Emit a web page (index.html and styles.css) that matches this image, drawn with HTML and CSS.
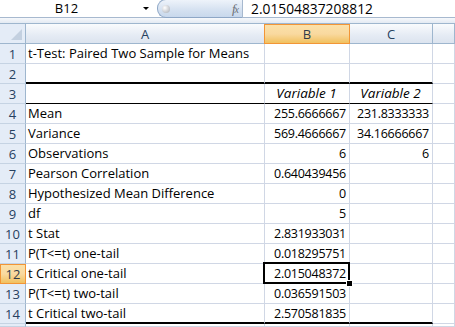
FILE: index.html
```html
<!DOCTYPE html>
<html lang="en">
<head>
    <meta charset="UTF-8">
    <title>t-Test: Paired Two Sample for Means</title>
    <link rel="stylesheet" href="styles.css">
</head>
<body>

    <!-- Formula bar -->
    <div class="formula-bar">
        <div class="name-box">
            <span class="ref">B12</span>
            <span class="caret"></span>
        </div>
        <div class="fx-group">
            <span class="knob"></span>
            <span class="fx">f<i>x</i></span>
        </div>
        <div class="formula">2.01504837208812</div>
    </div>
    <div class="bar-gap"></div>

    <!-- Sheet -->
    <div class="sheet">
        <div class="hd corner"><span class="tri"></span></div>
        <div class="hd col">A</div>
        <div class="hd col active">B</div>
        <div class="hd col">C</div>
        <div class="hd col"></div>

        <div class="hd row">1</div>
        <div class="c">t-Test: Paired Two Sample for Means</div>
        <div class="c"></div><div class="c"></div><div class="c"></div>

        <div class="hd row">2</div>
        <div class="c thick"></div><div class="c thick"></div><div class="c thick"></div><div class="c"></div>

        <div class="hd row">3</div>
        <div class="c thin"></div>
        <div class="c thin mid"><em>Variable 1</em></div>
        <div class="c thin mid"><em>Variable 2</em></div>
        <div class="c"></div>

        <div class="hd row">4</div>
        <div class="c">Mean</div>
        <div class="c num">255.6666667</div>
        <div class="c num">231.8333333</div>
        <div class="c"></div>

        <div class="hd row">5</div>
        <div class="c">Variance</div>
        <div class="c num">569.4666667</div>
        <div class="c num">34.16666667</div>
        <div class="c"></div>

        <div class="hd row">6</div>
        <div class="c">Observations</div>
        <div class="c num">6</div>
        <div class="c num">6</div>
        <div class="c"></div>

        <div class="hd row">7</div>
        <div class="c">Pearson Correlation</div>
        <div class="c num">0.640439456</div>
        <div class="c"></div><div class="c"></div>

        <div class="hd row">8</div>
        <div class="c">Hypothesized Mean Difference</div>
        <div class="c num">0</div>
        <div class="c"></div><div class="c"></div>

        <div class="hd row">9</div>
        <div class="c">df</div>
        <div class="c num">5</div>
        <div class="c"></div><div class="c"></div>

        <div class="hd row">10</div>
        <div class="c">t Stat</div>
        <div class="c num">2.831933031</div>
        <div class="c"></div><div class="c"></div>

        <div class="hd row">11</div>
        <div class="c">P(T&lt;=t) one-tail</div>
        <div class="c num">0.018295751</div>
        <div class="c"></div><div class="c"></div>

        <div class="hd row active">12</div>
        <div class="c">t Critical one-tail</div>
        <div class="c num selected">2.015048372</div>
        <div class="c"></div><div class="c"></div>

        <div class="hd row">13</div>
        <div class="c">P(T&lt;=t) two-tail</div>
        <div class="c num">0.036591503</div>
        <div class="c"></div><div class="c"></div>

        <div class="hd row">14</div>
        <div class="c thick">t Critical two-tail</div>
        <div class="c num thick">2.570581835</div>
        <div class="c thick"></div>
        <div class="c"></div>

        <div class="hd row"></div>
        <div class="c"></div><div class="c"></div><div class="c"></div><div class="c"></div>
    </div>

</body>
</html>
```

FILE: styles.css
```css
body {
    margin: 0;
    padding: 0;
    background: #fff;
    font-family: "Open Sans", "Liberation Sans", sans-serif;
    font-size: 13px;
    color: #000;
    overflow: hidden;
}

/* Formula bar */

.formula-bar {
    display: flex;
    height: 17px;
    border-bottom: 1px solid #a7b9cf;
    background: #fff;
}

.name-box {
    width: 157px;
    display: flex;
    align-items: center;
}

.name-box .ref {
    flex: 1;
    text-align: center;
    padding-right: 10px;
    font-size: 13px;
    line-height: 17px;
}

.name-box .caret {
    width: 0;
    height: 0;
    border-left: 3px solid transparent;
    border-right: 3px solid transparent;
    border-top: 3px solid #000;
    margin-right: 8px;
}

.fx-group {
    width: 84px;
    display: flex;
    align-items: center;
    justify-content: space-between;
    border: 1px solid #8ea7c6;
    border-right: none;
    border-radius: 9px 0 0 9px;
    background: linear-gradient(#eef3fa, #d6e2f1 55%, #c8d8ec);
    margin-top: -1px;
    height: 17px;
}

.fx-group .knob {
    width: 8px;
    height: 8px;
    border-radius: 50%;
    margin-left: 4px;
    background: radial-gradient(circle at 35% 35%, #fff, #c9ccd1 60%, #a5abb3);
}

.fx-group .fx {
    font-family: "Liberation Serif", serif;
    font-style: italic;
    font-size: 13px;
    line-height: 15px;
    color: #6b6f75;
    margin-right: 4px;
    letter-spacing: -1px;
}

.fx-group .fx i {
    font-size: 10px;
}

.formula {
    flex: 1;
    border-left: 1px solid #a7b9cf;
    padding-left: 8px;
    line-height: 17px;
    font-size: 13.8px;
}

.bar-gap {
    height: 5px;
    background: linear-gradient(#f6f8fb, #e3eaf3);
    border-bottom: 1px solid #9eb6ce;
}

/* Sheet grid */

.sheet {
    display: grid;
    grid-template-columns: 26px 239px 85px 83px 1fr;
    grid-template-rows: repeat(15, 20px) 3px;
    overflow: hidden;
}

.hd {
    box-sizing: border-box;
    color: #27415f;
    display: flex;
    align-items: center;
    justify-content: center;
    font-size: 13px;
}

.corner {
    background: #e4ecf7;
    border-right: 1px solid #9eb6ce;
    border-bottom: 1px solid #9eb6ce;
    position: relative;
}

.corner .tri {
    position: absolute;
    right: 3px;
    bottom: 3px;
    width: 0;
    height: 0;
    border-left: 11px solid transparent;
    border-bottom: 11px solid #c3d0e0;
}

.col {
    background: linear-gradient(#f9fbfd, #e5ebf4 60%, #dce4ef);
    border-right: 1px solid #9eb6ce;
    border-bottom: 1px solid #9eb6ce;
}

.row {
    background: #e4ecf7;
    border-right: 1px solid #9eb6ce;
    border-bottom: 1px solid #c5d3e3;
}

.hd.active {
    background: linear-gradient(#fbe1a9, #f9d99f 50%, #f1c15f);
    border: 1px solid #f29536;
    color: #2f3b4a;
}

.col.active {
    margin-left: -1px;
}

.c {
    box-sizing: border-box;
    border-right: 1px solid #d0d7e5;
    border-bottom: 1px solid #d0d7e5;
    padding: 0 3px 0 2px;
    line-height: 19px;
    white-space: nowrap;
    position: relative;
}

.c.num {
    text-align: right;
    font-size: 12.5px;
    letter-spacing: -0.25px;
}

.c.mid {
    text-align: center;
    font-size: 13.5px;
}

.c.thin {
    border-bottom-color: #000;
}

.c.thick {
    border-bottom: 2px solid #000;
}

.c.selected::after {
    content: "";
    position: absolute;
    left: -2px;
    top: -2px;
    right: -1px;
    bottom: -1px;
    border: 2px solid #000;
}

.c.selected::before {
    content: "";
    position: absolute;
    right: -4px;
    bottom: -4px;
    width: 5px;
    height: 5px;
    background: #000;
    border: 1px solid #fff;
    z-index: 1;
}
```
